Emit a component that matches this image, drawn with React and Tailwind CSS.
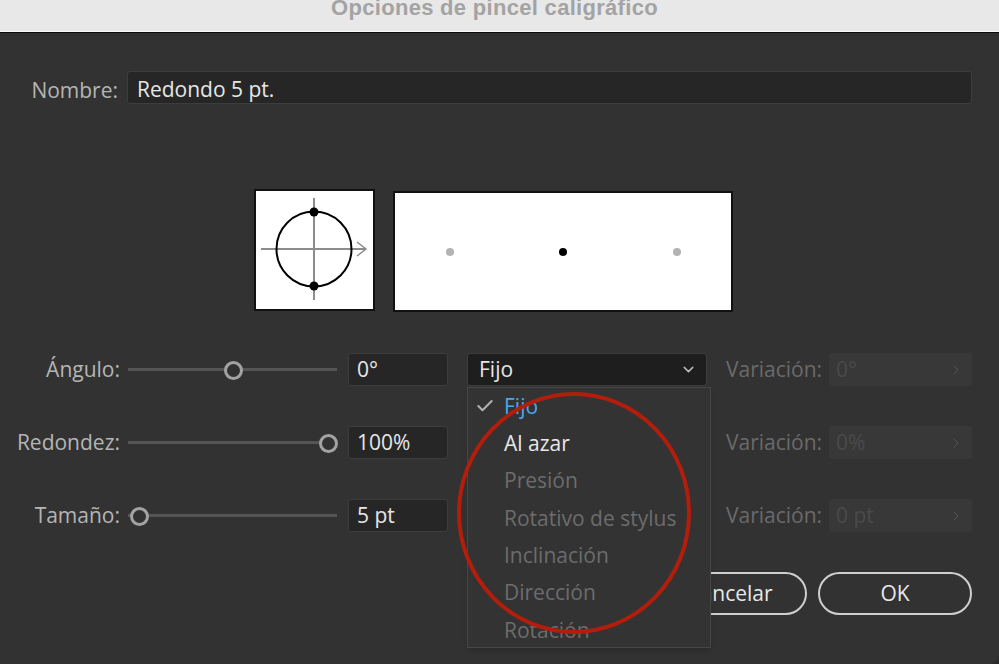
import { ChevronDown, ChevronRight, Check } from "lucide-react";

const font = { fontFamily: '"Open Sans", "Noto Sans", sans-serif' };

function Slider({ pos }) {
  // pos = thumb center, px from track left
  return (
    <div className="relative ml-[8px] w-[209px] h-[20px] flex items-center">
      <div className="w-full h-[3px] bg-[#555555]" />
      <div
        className="absolute top-[1px] w-[19px] h-[19px] rounded-full border-[3px] border-[#a3a3a3] bg-[#323232]"
        style={{ left: pos - 9.5 }}
      />
    </div>
  );
}

function ParamRow({ label, thumb, value, variation }) {
  return (
    <div className="flex items-center h-[33px]">
      <div className="w-[120px] text-right text-[21px] text-[#b5b5b5] whitespace-nowrap">{label}</div>
      <Slider pos={thumb} />
      <div className="ml-[11px] w-[100px] h-[33px] rounded-[3px] bg-[#262626] border border-[#3d3d3d] flex items-center px-[8px] text-[21px] text-[#e6e6e6]">
        {value}
      </div>
      <div className="ml-[19px] w-[240px] h-[33px] rounded-[3px] bg-[#1e1e1e] border border-[#3d3d3d] flex items-center justify-between pl-[11px] pr-[9px] text-[21px] text-[#e6e6e6]">
        <span>Fijo</span>
        <ChevronDown size={17} strokeWidth={2} className="text-[#bdbdbd]" />
      </div>
      <div className="ml-[19px] w-[103px] text-[21px] text-[#6a6a6a] whitespace-nowrap">Variación:</div>
      <div className="w-[143px] h-[33px] rounded-[3px] bg-[#383838] flex items-center justify-between pl-[7px] pr-[8px] text-[21px] text-[#4a4a4a]">
        <span>{variation}</span>
        <ChevronRight size={16} strokeWidth={1.5} className="text-[#555555]" />
      </div>
    </div>
  );
}

const menuItems = [
  { text: "Fijo", color: "text-[#4aa8f0]", checked: true },
  { text: "Al azar", color: "text-[#e8e8e8]" },
  { text: "Presión", color: "text-[#6c6c6c]" },
  { text: "Rotativo de stylus", color: "text-[#6c6c6c]" },
  { text: "Inclinación", color: "text-[#6c6c6c]" },
  { text: "Dirección", color: "text-[#6c6c6c]" },
  { text: "Rotación", color: "text-[#6c6c6c]" },
];

export default function App() {
  return (
    <div className="relative w-[999px] h-[664px] overflow-hidden bg-[#2a2a2a]" style={font}>
      {/* title bar */}
      <div className="h-[31px] bg-[#e8e8e8] flex justify-center items-start overflow-hidden pr-[10px]">
        <span
          className="mt-[-3px] text-[22px] leading-none font-bold text-[#a3a3a3] tracking-[0.3px]"
          style={{ fontFamily: '"Liberation Sans", Arial, sans-serif' }}
        >
          Opciones de pincel caligráfico
        </span>
      </div>
      <div className="h-[1px] bg-[#fafafa]" />
      <div className="h-[1px] bg-[#0c0c0c]" />

      <div className="h-[631px] bg-[#323232] rounded-br-[10px] flex flex-col">
        {/* Nombre */}
        <div className="flex items-start h-[33px] mt-[38px]">
          <div className="w-[118px] h-[33px] pt-[5px] leading-[28px] text-right text-[21px] text-[#b5b5b5]">Nombre:</div>
          <div className="ml-[9px] w-[845px] h-[33px] rounded-[3px] bg-[#262626] border border-[#3d3d3d] pt-[4px] px-[9px] leading-[26px] text-[21px] text-[#e6e6e6]">
            Redondo 5 pt.
          </div>
        </div>

        {/* previews */}
        <div className="flex items-start mt-[85px] pl-[254px]">
          <div className="w-[121px] h-[122px] bg-white border-2 border-[#111111]">
            <svg width="117" height="118" viewBox="2 2 117 118">
              <line x1="60" y1="9" x2="60" y2="111" stroke="#8c8c8c" strokeWidth="2" />
              <line x1="7" y1="60" x2="112" y2="60" stroke="#8c8c8c" strokeWidth="2" />
              <polyline points="103,53 112,60 103,67" fill="none" stroke="#8c8c8c" strokeWidth="1.5" />
              <circle cx="60" cy="60" r="37.5" fill="none" stroke="#000" strokeWidth="2" />
              <circle cx="60" cy="23" r="4.5" fill="#000" />
              <circle cx="60" cy="97" r="4.5" fill="#000" />
            </svg>
          </div>
          <div className="ml-[18px] mt-[2px] w-[340px] h-[121px] bg-white border-2 border-[#111111] flex items-center">
            <svg width="336" height="117" viewBox="0 0 336 117">
              <circle cx="55" cy="59" r="4" fill="#b3b3b3" />
              <circle cx="168" cy="59" r="4" fill="#000" />
              <circle cx="282" cy="59" r="4" fill="#b3b3b3" />
            </svg>
          </div>
        </div>

        {/* parameter rows */}
        <div className="flex flex-col gap-[40px] mt-[41px]">
          <ParamRow label="Ángulo:" thumb={105} value="0°" variation="0°" />
          <ParamRow label="Redondez:" thumb={200} value="100%" variation="0%" />
          <ParamRow label="Tamaño:" thumb={11} value="5 pt" variation="0 pt" />
        </div>

        {/* buttons */}
        <div className="flex justify-end gap-[11px] pr-[27px] mt-[40px]">
          <button className="w-[154px] h-[43px] rounded-full border-2 border-[#cfcfcf] text-[21px] text-[#e8e8e8]">
            Cancelar
          </button>
          <button className="w-[154px] h-[43px] rounded-full border-2 border-[#cfcfcf] text-[21px] text-[#e8e8e8]">
            OK
          </button>
        </div>
      </div>

      {/* dropdown menu */}
      <div className="absolute left-[467px] top-[387px] w-[244px] h-[261px] bg-[#333333] border border-[#474747] shadow-md">
        {menuItems.map((item) => (
          <div key={item.text} className="relative h-[37.3px] flex items-center pl-[36px]">
            {item.checked && (
              <Check size={20} strokeWidth={2.5} className="absolute left-[7px] top-[8px] text-[#b0b0b0]" />
            )}
            <span className={`text-[21px] ${item.color}`}>{item.text}</span>
          </div>
        ))}
      </div>

      {/* red annotation circle */}
      <svg className="absolute inset-0 pointer-events-none" width="999" height="664">
        <ellipse cx="574" cy="513" rx="115" ry="119" fill="none" stroke="#b31d0c" strokeWidth="4" />
      </svg>
    </div>
  );
}
